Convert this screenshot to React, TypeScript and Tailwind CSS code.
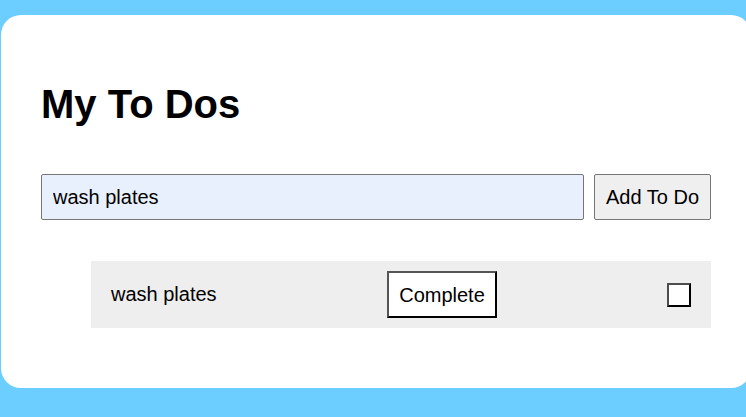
import { useState } from "react";

type Todo = { id: number; text: string; done: boolean };

export default function App() {
  const [draft, setDraft] = useState("wash plates");
  const [todos, setTodos] = useState<Todo[]>([{ id: 1, text: "wash plates", done: false }]);

  const add = () => {
    if (!draft.trim()) return;
    setTodos((t) => [...t, { id: Date.now(), text: draft, done: false }]);
  };

  return (
    <div className="h-[417px] w-full overflow-hidden bg-[#6ccdff] pt-[15px] pl-[1px]" style={{ fontFamily: '"Liberation Sans", Arial, sans-serif' }}>
      <div className="w-[750px] rounded-[20px] bg-white pt-[66px] pb-[60px] pl-[40px]">
        <h1 className="m-0 text-[40px] leading-[46px] font-bold text-black">My To Dos</h1>

        <div className="mt-[47px] flex w-[670px] gap-[10px]">
          <input
            value={draft}
            onChange={(e) => setDraft(e.target.value)}
            className="h-[46px] flex-1 rounded-[2px] border border-[#767676] bg-[#e8f0fe] px-[11px] text-[20px] text-black outline-none"
          />
          <button
            type="button"
            onClick={add}
            className="h-[46px] w-[117px] rounded-[2px] border border-[#767676] bg-[#efefef] text-[20px] text-black"
          >
            Add To Do
          </button>
        </div>

        <ul className="mt-[41px] ml-[50px] w-[620px]">
          {todos.map((todo) => (
            <li key={todo.id} className="flex items-center justify-between bg-[#eeeeee] py-[10px] pr-[20px] pl-[20px]">
              <span className="w-[106px] text-[20px] leading-[23px] text-black">{todo.text}</span>
              <button
                type="button"
                className="h-[47px] w-[110px] border-2 border-t-[#555555] border-l-[#555555] border-r-black border-b-black bg-white px-0 text-[20px] text-black"
              >
                Complete
              </button>
              <span className="box-border block h-[24px] w-[24px] border-2 border-t-[#4d4d4d] border-l-[#4d4d4d] border-r-black border-b-black bg-white" />
            </li>
          ))}
        </ul>
      </div>
    </div>
  );
}
